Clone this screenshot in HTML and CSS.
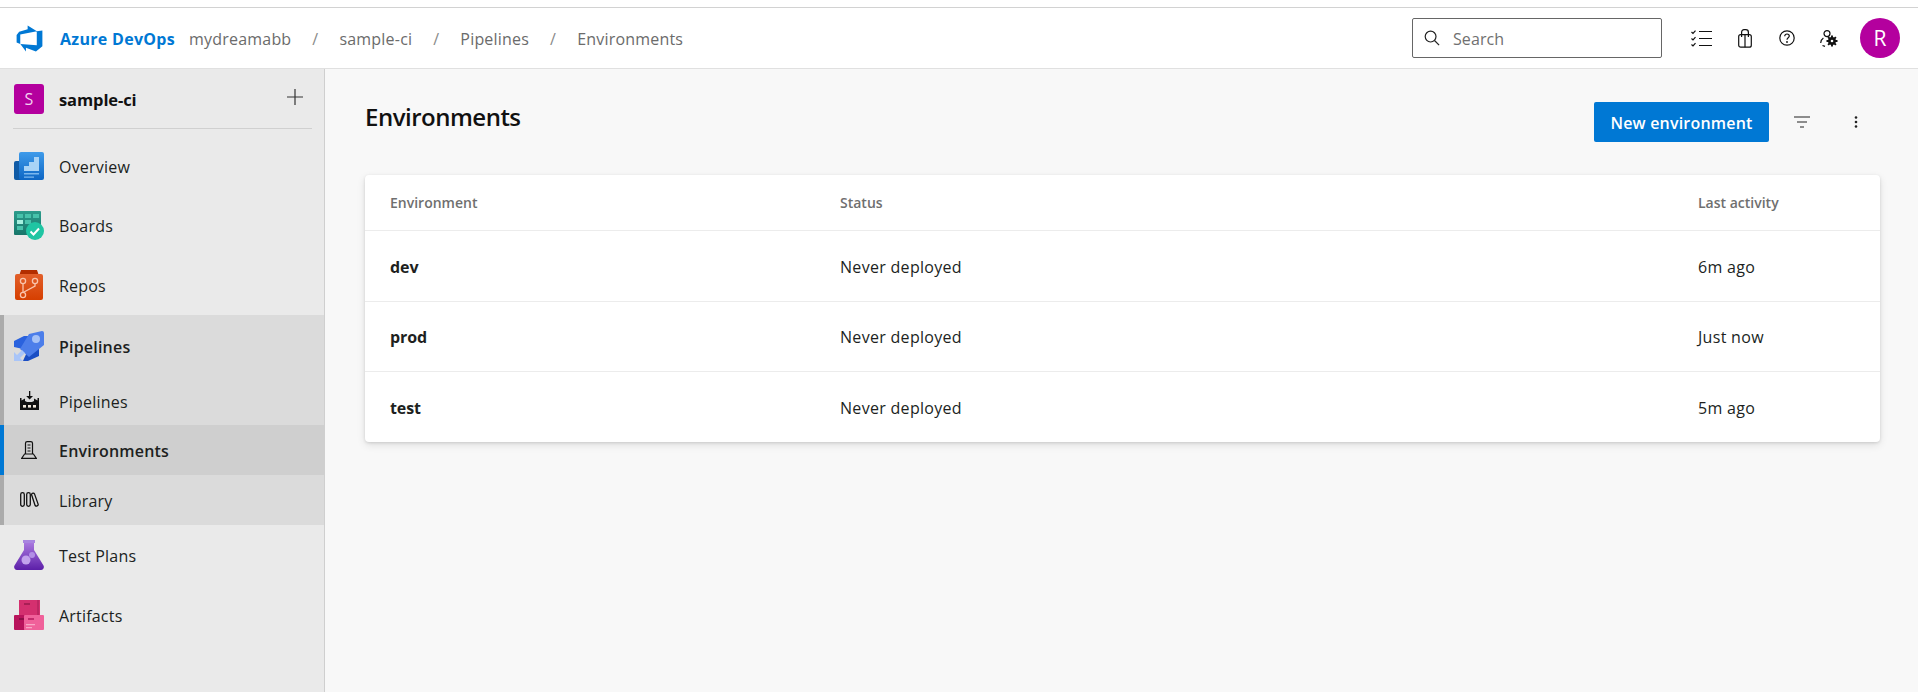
FILE: index.html
```html
<!DOCTYPE html>
<html lang="en">
<head>
<meta charset="utf-8">
<title>Environments</title>
<link rel="stylesheet" href="styles.css">
</head>
<body>
<div class="topstrip"></div>
<header class="header">
  <svg class="logo" viewBox="0 0 18 18"><path fill="#0078d4" d="M17 4v9.740l-4 3.280-6.200-2.260V17L3.290 12.410l10.230.8V4.440zm-3.410.49L7.850 1v2.290L2.580 4.840 1 6.870v4.610l2.260 1V6.570z"/></svg>
  <span class="brand">Azure DevOps</span>
  <nav class="crumbs">
    <span>mydreamabb</span><i>/</i><span>sample-ci</span><i>/</i><span>Pipelines</span><i>/</i><span>Environments</span>
  </nav>
  <div class="search">
    <svg class="search-icon" viewBox="0 0 16 16"><circle cx="6.600" cy="6.600" r="5.400" fill="none" stroke="#222" stroke-width="1.200"/><path d="M10.500 10.500l4.600 4.600" stroke="#222" stroke-width="1.200" fill="none"/></svg>
    <span class="search-text">Search</span>
  </div>
  <div class="tools">
    <span class="tool tool-first"><svg width="21" height="17" viewBox="0 0 21 17"><g fill="none" stroke="#111" stroke-width="1.200"><path d="M0.500 2l1.500 1.500L4.500 0.700M0.500 8.500L2 10l2.500-2.800M0.500 14.500L2 16l2.500-2.800"/><path d="M8 1.500h13M8 8.500h13M8 15.500h13"/></g></svg></span>
    <span class="tool"><svg width="14" height="19" viewBox="0 0 14 19"><g fill="none" stroke="#111" stroke-width="1.200"><rect x="0.700" y="5.600" width="12.600" height="12.600" rx="2"/><path d="M3.600 8V3.400C3.600 1.800 4.700.7 6 .7h1.800c1.400 0 2.600 1.100 2.600 2.700V8M7 5.600v12.600"/></g></svg></span>
    <span class="tool"><svg width="16" height="16" viewBox="0 0 16 16"><circle cx="8" cy="8" r="7.200" fill="none" stroke="#111" stroke-width="1.200"/><path d="M5.700 6.200C5.700 4.900 6.700 4 8 4s2.300.9 2.300 2.100c0 1.700-2.300 1.800-2.300 3.700" fill="none" stroke="#111" stroke-width="1.200"/><circle cx="8" cy="12" r=".9" fill="#111"/></svg></span>
    <span class="tool"><svg width="18" height="17" viewBox="0 0 18 17"><g fill="none" stroke="#111" stroke-width="1.200"><circle cx="7" cy="3.600" r="3"/><path d="M3.400 8C1.600 9.200.7 10.800.7 13M2.500 15.500l2.500.9"/></g><circle cx="12" cy="11" r="3.900" fill="#111"/><path d="M12 5.500v11M6.500 11h11M8.100 7.100l7.800 7.800M8.100 14.900l7.800-7.800" stroke="#111" stroke-width="1.900"/><circle cx="12" cy="11" r="1.300" fill="#fff"/></svg></span>
    <span class="avatar">R</span>
  </div>
</header>
<div class="shell">
  <aside class="sidebar">
    <div class="project">
      <span class="tile">S</span>
      <span class="project-name">sample-ci</span>
      <svg class="plus" width="16" height="16" viewBox="0 0 16 16"><path d="M8 0v16M0 8h16" stroke="#333" stroke-width="1.200"/></svg>
    </div>
    <ul class="nav">
      <li class="item">
        <svg class="hub" width="30" height="28" viewBox="0 0 30 28"><defs><linearGradient id="ov" x1="0" y1="0" x2="0" y2="1"><stop offset="0" stop-color="#3f9bea"/><stop offset="1" stop-color="#0d66c4"/></linearGradient></defs><rect y="9" width="10" height="19" rx="2" fill="#105ba6"/><rect x="5" width="25" height="28" rx="2" fill="url(#ov)"/><path d="M10 14h5V10h5V5h5v14H10z" fill="#a8d3f6"/><path d="M10 21h15v1.400H10zM10 24.500h10v1.200H10z" fill="#7bb7ee"/></svg>
        <span>Overview</span>
      </li>
      <li class="item">
        <svg class="hub" width="30" height="29" viewBox="0 0 30 29"><defs><linearGradient id="bo" x1="0" y1="0" x2="0" y2="1"><stop offset="0" stop-color="#2c9c8c"/><stop offset="1" stop-color="#18766a"/></linearGradient></defs><rect width="27" height="24" rx="1" fill="url(#bo)"/><g fill="#47c2ab"><rect x="3" y="3" width="6" height="4"/><rect x="11" y="3" width="6" height="4"/><rect x="19" y="3" width="6" height="4"/><rect x="11" y="9" width="6" height="4"/><rect x="3" y="15" width="6" height="4"/></g><rect x="3" y="9" width="6" height="4" fill="#a5f0df"/><circle cx="21" cy="20" r="9" fill="#1fc5a3"/><path d="M16.500 20.500l3 3 5.500-6" fill="none" stroke="#fff" stroke-width="2"/></svg>
        <span>Boards</span>
      </li>
      <li class="item">
        <svg class="hub hub-repos" width="28" height="30" viewBox="0 0 28 30"><defs><linearGradient id="re" x1="0" y1="0" x2="0" y2="1"><stop offset="0" stop-color="#e2602b"/><stop offset="1" stop-color="#d63f00"/></linearGradient></defs><path d="M4 6l2-6h16l2 6z" fill="#b32e00"/><rect y="4" width="28" height="26" rx="2" fill="url(#re)"/><g fill="none" stroke="#f9c4ac" stroke-width="1.300"><circle cx="8" cy="11" r="2.600"/><circle cx="20" cy="11" r="2.600"/><circle cx="8" cy="25" r="2.600"/><path d="M8 13.600v8.800M20 13.600v2.400l-11 6"/></g></svg>
        <span>Repos</span>
      </li>
      <li class="group">
        <ul class="group-list">
          <li class="item item-head">
            <svg class="hub" width="30" height="30" viewBox="0 0 30 30"><path d="M0 16v-6l10-5h9L9 18z" fill="#2a62de"/><path d="M25 12v13l-11 5H9l4-9z" fill="#1a4ec4"/><path d="M15 3L28 0q2 0 2 2v12L15 26l-9-8z" fill="#4c7eea"/><circle cx="22" cy="8" r="4" fill="#a6c2f6"/><path d="M0 21v9h9l-3-3 5-5-3-3-5 5z" fill="#a9c5f8"/></svg>
            <span>Pipelines</span>
          </li>
          <li class="item item-sub item-sub-first">
            <span class="subicon"><svg width="19" height="19" viewBox="0 0 19 19"><g fill="#111"><path d="M9 0h1.300v5H13l-3.400 3.400L6.200 5H9z"/><path d="M0 7h1.500v2.500L5 7.500v2.500l2 1h5l2-1V7.500l3.500 2V7H19v12H0z"/></g><g fill="#f0e8dc"><rect x="3" y="14" width="3" height="2.600"/><rect x="8" y="14" width="3" height="2.600"/><rect x="13" y="14" width="3" height="2.600"/></g></svg></span>
            <span>Pipelines</span>
          </li>
          <li class="item item-sub item-active">
            <span class="subicon"><svg width="16" height="18" viewBox="0 0 16 18"><g fill="none" stroke="#111" stroke-width="1.200"><path d="M4.500 13V2.200C4.500 1.300 5.300.6 6.200.6h3.600c.9 0 1.700.7 1.700 1.600V13"/><path d="M6.500 4h3M6.500 7h3M6.500 10h3"/><path d="M3.600 13h8.800l3 4.400H.6z"/></g></svg></span>
            <span>Environments</span>
          </li>
          <li class="item item-sub">
            <span class="subicon"><svg width="19" height="15" viewBox="0 0 19 15"><g fill="none" stroke="#111" stroke-width="1.300"><rect x=".7" y=".7" width="3.600" height="13.600" rx="1.800"/><rect x="6.700" y=".7" width="3.600" height="13.600" rx="1.800"/><path d="M11.500 2.400c.5-1.400 2.400-1.800 3-.5l3.600 10.200c.5 1.500-2.200 3-3 1.300z"/></g></svg></span>
            <span>Library</span>
          </li>
        </ul>
      </li>
      <li class="item item-after">
        <svg class="hub" width="30" height="30" viewBox="0 0 30 30"><defs><linearGradient id="te" x1="0" y1="0" x2="0" y2="1"><stop offset="0" stop-color="#a877de"/><stop offset="1" stop-color="#5c1fa8"/></linearGradient></defs><rect x="9" width="12" height="3" fill="#a985e0"/><path d="M10 3h10v7l9.500 15.500c1 2 0 4.500-2.500 4.500H3c-2.500 0-3.500-2.500-2.500-4.500L10 10z" fill="url(#te)"/><circle cx="12" cy="20" r="4.500" fill="#c2a2ec"/><circle cx="18" cy="15" r="3" fill="#b28fe6"/></svg>
        <span>Test Plans</span>
      </li>
      <li class="item">
        <svg class="hub" width="30" height="30" viewBox="0 0 30 30"><rect x="5" width="21" height="16" fill="#d4306f"/><rect x="10" y="3" width="6" height="2" fill="#a81f55"/><rect x="23" width="2" height="16" fill="#bd2863"/><rect y="15" width="11" height="15" rx="1" fill="#b8145c"/><rect x="10" y="15" width="20" height="15" rx="1" fill="#f0619a"/><rect x="5" y="18" width="5" height="2" fill="#8c0f47"/><rect x="14" y="18" width="6" height="2" fill="#c42a6c"/><path d="M12 24h9v1.200h-9zM12 27h6v1.200h-6z" fill="#f9a6c6"/></svg>
        <span>Artifacts</span>
      </li>
    </ul>
  </aside>
  <main class="content">
    <div class="titlebar">
      <h1 class="title">Environments</h1>
      <button class="primary">New environment</button>
      <span class="action action-filter"><svg width="16" height="12" viewBox="0 0 16 12"><path d="M0 1h16M3 6h10M6 11h4" stroke="#222" stroke-width="1.200"/></svg></span>
      <span class="action"><svg width="4" height="12" viewBox="0 0 4 12"><circle cx="2" cy="1.500" r="1.300" fill="#222"/><circle cx="2" cy="6" r="1.300" fill="#222"/><circle cx="2" cy="10.500" r="1.300" fill="#222"/></svg></span>
    </div>
    <section class="card">
      <div class="row row-head"><span>Environment</span><span>Status</span><span>Last activity</span></div>
      <div class="row"><span class="name">dev</span><span>Never deployed</span><span>6m ago</span></div>
      <div class="row"><span class="name">prod</span><span>Never deployed</span><span>Just now</span></div>
      <div class="row row-last"><span class="name">test</span><span>Never deployed</span><span>5m ago</span></div>
    </section>
  </main>
</div>
</body>
</html>
```
FILE: styles.css
```css
* { box-sizing: border-box; }
html, body { margin: 0; padding: 0; height: 100%; overflow: hidden; }
body { font-family: "Open Sans", "Noto Sans", "Liberation Sans", sans-serif; font-size: 16px; color: #201f1e; background: #f8f8f8; }

.topstrip { height: 8px; background: #fff; border-bottom: 1px solid #d2d2d2; }

.header { height: 61px; display: flex; align-items: center; background: #fff; border-bottom: 1px solid #e0e0e0; padding-left: 15px; padding-right: 18px; }
.logo { width: 29px; height: 29px; flex: none; }
.brand { margin-left: 16px; padding-top: 2px; font-size: 16px; font-weight: 700; color: #0078d4; white-space: nowrap; letter-spacing: 0.3px; }
.crumbs { display: flex; align-items: center; margin-left: 14px; padding-top: 2px; flex: 1; color: #6b6b6b; font-size: 16px; letter-spacing: 0.2px; }
.crumbs i { font-style: normal; color: #8a8a8a; margin: 0 21px; }

.search { width: 250px; height: 40px; flex: none; display: flex; align-items: center; border: 1px solid #666; border-radius: 2px; padding-left: 11px; background: #fff; }
.search-icon { width: 16px; height: 16px; flex: none; }
.search-text { margin-left: 13px; padding-top: 2px; color: #707070; font-size: 16px; letter-spacing: 0.1px; }

.tools { display: flex; align-items: center; margin-left: 17px; flex: none; }
.tool { width: 42px; display: flex; justify-content: center; align-items: center; }
.tool-first { width: 45px; }
.avatar { width: 40px; height: 40px; margin-left: 10px; border-radius: 50%; background: #b4009e; color: #fff; display: flex; align-items: center; justify-content: center; font-size: 21px; }

.shell { display: flex; height: 623px; }
.sidebar { width: 325px; flex: none; background: #eaeaea; border-right: 1px solid #cfcfcf; }
.project { height: 60px; margin: 0 12px 0 13px; display: flex; align-items: center; padding-left: 1px; border-bottom: 1px solid #d0d0d0; }
.tile { width: 30px; height: 30px; border-radius: 3px; background: #b4009e; color: #f2d0ee; display: flex; align-items: center; justify-content: center; font-size: 16px; }
.project-name { margin-left: 15px; padding-top: 2px; font-weight: 700; font-size: 16.500px; color: #111; flex: 1; letter-spacing: -0.1px; }
.plus { margin-right: 9px; margin-top: -3px; }

.nav, .group-list { list-style: none; margin: 0; padding: 0; }
.nav { padding-top: 7px; }
.item { height: 59.500px; display: flex; align-items: center; padding-left: 14px; font-size: 16px; letter-spacing: 0.2px; color: #201f1e; }
.item > span:last-child { margin-left: 15px; padding-top: 2px; }
.hub { flex: none; }
.hub-repos { margin: 0 1px; }
.group { background: #dbdbdb; border-left: 4px solid #ababab; }
.group .item { padding-left: 10px; }
.item-head { height: 62px; font-weight: 600; }
.item-sub { height: 50px; }
.item-sub-first { height: 48px; }
.subicon { width: 30px; flex: none; display: flex; justify-content: center; }
.item-active { background: #cfcfcf; font-weight: 600; box-shadow: -4px 0 0 #0078d4; }
.item-after { margin-top: 1px; }

.content { flex: 1; padding: 33px 38px 0 40px; min-width: 0; }
.titlebar { display: flex; align-items: flex-start; height: 73px; }
.title { margin: 0 auto 0 0; font-size: 24px; line-height: 30px; font-weight: 600; color: #111; letter-spacing: -0.5px; }
.primary { width: 175px; height: 40px; border: 0; border-radius: 2px; background: #0078d4; color: #fff; font-family: inherit; font-size: 16px; font-weight: 600; padding: 2px 0 0; letter-spacing: 0.2px; }
.action { width: 40px; height: 40px; margin-left: 14px; display: flex; align-items: center; justify-content: center; }
.action-filter { margin-left: 13px; }
.titlebar .action:last-child { margin-right: 4px; }

.card { background: #fff; border-radius: 4px; box-shadow: 0 1px 3px rgba(0,0,0,.12), 0 3px 8px rgba(0,0,0,.1); }
.row { height: 70.500px; display: grid; grid-template-columns: 450px 858px 1fr; align-items: center; padding: 2px 0 0 25px; border-bottom: 1px solid #ececec; font-size: 16px; letter-spacing: 0.3px; }
.row-head { height: 56px; padding-top: 0; font-size: 14px; font-weight: 600; letter-spacing: 0; color: #6f6f6f; }
.row-last { height: 69.500px; border-bottom: 0; }
.name { font-weight: 700; letter-spacing: -0.1px; }
```
